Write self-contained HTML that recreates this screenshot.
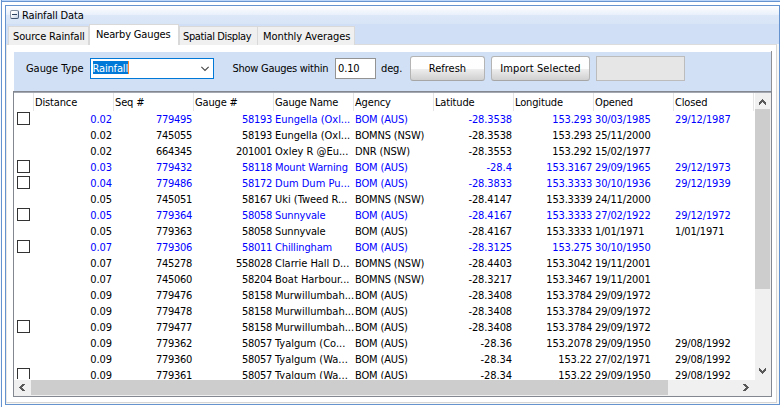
<!DOCTYPE html>
<html lang="en"><head><meta charset="utf-8"><title>Rainfall Data</title>
<style>
html,body{margin:0;padding:0;background:#fff;}
body{width:780px;height:407px;position:relative;overflow:hidden;font-family:"DejaVu Sans Condensed","Liberation Sans",sans-serif;font-size:11px;color:#000;letter-spacing:-0.15px;}
div,span,i{position:absolute;box-sizing:border-box;white-space:nowrap;}
.o0h{left:2px;top:0;width:778px;height:1px;background:#b9d6fa;}
.o0v{left:0;top:0;width:1px;height:407px;background:#f6f9fe;}
.o1h{left:1px;top:1px;width:779px;height:1px;background:#6593cf;}
.o1v{left:1px;top:0;width:1px;height:407px;background:#6593cf;}
.panel{left:5px;top:5px;width:775px;height:400px;border:1px solid #6593cf;background:#f9f8f4;}
.cap1{left:6px;top:6px;width:773px;height:9px;background:linear-gradient(#fefeff,#e8f0fb);}
.cap2{left:6px;top:15px;width:773px;height:9px;background:linear-gradient(#dce8f8,#d8e5f7);}
.strip{left:6px;top:24px;width:773px;height:20px;background:#d0dff5;}
.page{left:6px;top:44px;width:771px;height:359px;border:1px solid #d6d6d6;border-left-color:#ebe8e3;border-top-color:#dcdcdc;background:#fff;}
.tab{top:26px;height:19px;background:#f0f0f0;border:1px solid #d9d9d9;border-bottom:none;}
.tab span{top:3px;}
.tab.act{top:24px;height:21px;background:#fff;z-index:2;}
.ttl{left:22px;top:9px;}
.exp{left:10px;top:10px;width:9px;height:9px;border:1px solid;border-color:#7f8b9e #4d6180 #40536f #8f99aa;border-radius:2px;background:linear-gradient(135deg,#fff 25%,#c6d3e7);}
.exp:after{content:"";position:absolute;left:1px;top:3px;width:5px;height:1px;background:#2b3f5f;}
.bp{left:14px;top:52px;width:757px;height:39px;background:#d2e0f5;}
.bpr{left:771px;top:51px;width:1px;height:40px;background:#8f9094;}
.lbl{top:62px;}
.combo{left:90px;top:58px;width:124px;height:21px;border:1px solid #0078d7;background:#fff;}
.combo .sel{left:2px;top:2px;width:36px;height:13px;background:#0078d7;color:#fff;}
.combo .sel span{left:-0.5px;top:1px;}
.combo .sel:after{content:"";position:absolute;right:0;top:0;width:1px;height:13px;background:#ff8728;}
.tb{left:335px;top:58px;width:41px;height:21px;border:1px solid #939393;background:#fff;}
.tb span{left:2px;top:3px;}
.btn{top:56px;height:25px;border:1px solid #b4b4b4;border-bottom-color:#a6a6a6;border-radius:3px;background:linear-gradient(#fff 0%,#fefefe 50%,#ededed 54%,#d0d0d0 100%);text-align:center;line-height:24px;}
.btn span{position:static;}
.gb{left:596px;top:56px;width:89px;height:25px;border:1px solid #bcbcbc;background:#e6e6e6;}
.list{left:13px;top:91px;width:759px;height:306px;border:1px solid #828790;background:#fff;overflow:hidden;}
.hdr{left:0;top:0;width:757px;height:19px;border-top:1px solid #a4a8b0;}
.hc{top:0;height:18px;border-right:1px solid #e5e5e5;}
.hc span{left:1px;top:3px;}
.rows{left:0;top:19px;width:741px;height:268px;overflow:hidden;}
.row{position:relative;display:block;height:16px;width:741px;}
.row.b{color:#0000ff;}
.c{top:2px;width:78px;}
.c.r{text-align:right;letter-spacing:-0.3px;}
.c.l{margin-left:1px;}
.cb{left:3px;top:1px;width:13px;height:13px;border:1px solid #333;background:#fff;}
.vs{left:741px;top:1px;width:16px;height:287px;background:#f0f0f0;}
.hs{left:0;top:288px;width:757px;height:16px;background:#f0f0f0;}
.vt{left:0;top:16px;width:15px;height:180px;background:#cdcdcd;}
.ht{left:17px;top:0;width:637px;height:15px;background:#cdcdcd;}
svg{position:absolute;}
</style></head>
<body>
<div class="o0h"></div><div class="o0v"></div><div class="o1h"></div><div class="o1v"></div>
<div class="panel"></div>
<div class="cap1"></div><div class="cap2"></div><div class="strip"></div>
<i class="exp"></i><span class="ttl">Rainfall Data</span>
<div class="page"></div>
<div class="tab" style="left:8px;width:81px"><span style="left:4px">Source Rainfall</span></div>
<div class="tab act" style="left:89px;width:90px"><span style="left:6px;top:3px">Nearby Gauges</span></div>
<div class="tab" style="left:179px;width:79px"><span style="left:3px;letter-spacing:-0.36px">Spatial Display</span></div>
<div class="tab" style="left:257px;width:98px"><span style="left:5px;letter-spacing:-0.08px">Monthly Averages</span></div>
<div class="bp"></div><div class="bpr"></div>
<span class="lbl" style="left:26px;letter-spacing:-0.05px">Gauge Type</span>
<div class="combo"><div class="sel"><span>Rainfall</span></div>
<svg style="left:110px;top:7px" width="10" height="7" viewBox="0 0 10 7"><path d="M0.35 0.9 L4 4.5 L7.65 0.9" fill="none" stroke="#444" stroke-width="1.1"/></svg></div>
<span class="lbl" style="left:232.5px;letter-spacing:-0.27px">Show Gauges within</span>
<div class="tb"><span>0.10</span></div>
<span class="lbl" style="left:381px">deg.</span>
<div class="btn" style="left:410px;width:75px"><span style="letter-spacing:0">Refresh</span></div>
<div class="btn" style="left:491px;width:99px"><span style="letter-spacing:.1px">Import Selected</span></div>
<div class="gb"></div>
<div class="list">
<div class="hdr">
<div class="hc" style="left:0;width:20px"></div>
<div class="hc" style="left:20px;width:80px"><span>Distance</span></div>
<div class="hc" style="left:100px;width:80px"><span>Seq #</span></div>
<div class="hc" style="left:180px;width:80px"><span>Gauge #</span></div>
<div class="hc" style="left:260px;width:80px"><span>Gauge Name</span></div>
<div class="hc" style="left:340px;width:80px"><span>Agency</span></div>
<div class="hc" style="left:420px;width:80px"><span>Latitude</span></div>
<div class="hc" style="left:500px;width:80px"><span>Longitude</span></div>
<div class="hc" style="left:580px;width:80px"><span>Opened</span></div>
<div class="hc" style="left:660px;width:80px"><span>Closed</span></div>
</div>
<div class="rows">
<div class="row b"><i class="cb"></i><span class="c r" style="left:20px;letter-spacing:-0.07px">0.02</span><span class="c r" style="left:100px">779495</span><span class="c r" style="left:180px">58193</span><span class="c l" style="left:260px;letter-spacing:-0.02px">Eungella (Oxl...</span><span class="c l" style="left:340px">BOM (AUS)</span><span class="c r" style="left:420px;letter-spacing:-0.12px">-28.3538</span><span class="c r" style="left:500px;letter-spacing:-0.17px">153.293</span><span class="c l" style="left:580px">30/03/1985</span><span class="c l" style="left:660px">29/12/1987</span></div>
<div class="row"><span class="c r" style="left:20px;letter-spacing:-0.07px">0.02</span><span class="c r" style="left:100px">745055</span><span class="c r" style="left:180px">58193</span><span class="c l" style="left:260px;letter-spacing:-0.02px">Eungella (Oxl...</span><span class="c l" style="left:340px">BOMNS (NSW)</span><span class="c r" style="left:420px;letter-spacing:-0.12px">-28.3538</span><span class="c r" style="left:500px;letter-spacing:-0.17px">153.293</span><span class="c l" style="left:580px">25/11/2000</span><span class="c l" style="left:660px"></span></div>
<div class="row"><span class="c r" style="left:20px;letter-spacing:-0.07px">0.02</span><span class="c r" style="left:100px">664345</span><span class="c r" style="left:180px">201001</span><span class="c l" style="left:260px;letter-spacing:0.00px">Oxley R @Eu...</span><span class="c l" style="left:340px">DNR (NSW)</span><span class="c r" style="left:420px;letter-spacing:-0.12px">-28.3553</span><span class="c r" style="left:500px;letter-spacing:-0.17px">153.292</span><span class="c l" style="left:580px">15/02/1977</span><span class="c l" style="left:660px"></span></div>
<div class="row b"><i class="cb"></i><span class="c r" style="left:20px;letter-spacing:-0.07px">0.03</span><span class="c r" style="left:100px">779432</span><span class="c r" style="left:180px">58118</span><span class="c l" style="left:260px">Mount Warning</span><span class="c l" style="left:340px">BOM (AUS)</span><span class="c r" style="left:420px;letter-spacing:-0.02px">-28.4</span><span class="c r" style="left:500px;letter-spacing:-0.19px">153.3167</span><span class="c l" style="left:580px">29/09/1965</span><span class="c l" style="left:660px">29/12/1973</span></div>
<div class="row b"><i class="cb"></i><span class="c r" style="left:20px;letter-spacing:-0.07px">0.04</span><span class="c r" style="left:100px">779486</span><span class="c r" style="left:180px">58172</span><span class="c l" style="left:260px;letter-spacing:0.01px">Dum Dum Pu...</span><span class="c l" style="left:340px">BOM (AUS)</span><span class="c r" style="left:420px;letter-spacing:-0.12px">-28.3833</span><span class="c r" style="left:500px;letter-spacing:-0.19px">153.3333</span><span class="c l" style="left:580px">30/10/1936</span><span class="c l" style="left:660px">29/12/1939</span></div>
<div class="row"><span class="c r" style="left:20px;letter-spacing:-0.07px">0.05</span><span class="c r" style="left:100px">745051</span><span class="c r" style="left:180px">58167</span><span class="c l" style="left:260px;letter-spacing:-0.01px">Uki (Tweed R...</span><span class="c l" style="left:340px">BOMNS (NSW)</span><span class="c r" style="left:420px;letter-spacing:-0.12px">-28.4147</span><span class="c r" style="left:500px;letter-spacing:-0.19px">153.3339</span><span class="c l" style="left:580px">24/11/2000</span><span class="c l" style="left:660px"></span></div>
<div class="row b"><i class="cb"></i><span class="c r" style="left:20px;letter-spacing:-0.07px">0.05</span><span class="c r" style="left:100px">779364</span><span class="c r" style="left:180px">58058</span><span class="c l" style="left:260px">Sunnyvale</span><span class="c l" style="left:340px">BOM (AUS)</span><span class="c r" style="left:420px;letter-spacing:-0.12px">-28.4167</span><span class="c r" style="left:500px;letter-spacing:-0.19px">153.3333</span><span class="c l" style="left:580px">27/02/1922</span><span class="c l" style="left:660px">29/12/1972</span></div>
<div class="row"><span class="c r" style="left:20px;letter-spacing:-0.07px">0.05</span><span class="c r" style="left:100px">779363</span><span class="c r" style="left:180px">58058</span><span class="c l" style="left:260px">Sunnyvale</span><span class="c l" style="left:340px">BOM (AUS)</span><span class="c r" style="left:420px;letter-spacing:-0.12px">-28.4167</span><span class="c r" style="left:500px;letter-spacing:-0.19px">153.3333</span><span class="c l" style="left:580px">1/01/1971</span><span class="c l" style="left:660px">1/01/1971</span></div>
<div class="row b"><i class="cb"></i><span class="c r" style="left:20px;letter-spacing:-0.07px">0.07</span><span class="c r" style="left:100px">779306</span><span class="c r" style="left:180px">58011</span><span class="c l" style="left:260px">Chillingham</span><span class="c l" style="left:340px">BOM (AUS)</span><span class="c r" style="left:420px;letter-spacing:-0.12px">-28.3125</span><span class="c r" style="left:500px;letter-spacing:-0.17px">153.275</span><span class="c l" style="left:580px">30/10/1950</span><span class="c l" style="left:660px"></span></div>
<div class="row"><span class="c r" style="left:20px;letter-spacing:-0.07px">0.07</span><span class="c r" style="left:100px">745278</span><span class="c r" style="left:180px">558028</span><span class="c l" style="left:260px;letter-spacing:-0.03px">Clarrie Hall D...</span><span class="c l" style="left:340px">BOMNS (NSW)</span><span class="c r" style="left:420px;letter-spacing:-0.12px">-28.4403</span><span class="c r" style="left:500px;letter-spacing:-0.19px">153.3042</span><span class="c l" style="left:580px">19/11/2001</span><span class="c l" style="left:660px"></span></div>
<div class="row"><span class="c r" style="left:20px;letter-spacing:-0.07px">0.07</span><span class="c r" style="left:100px">745060</span><span class="c r" style="left:180px">58204</span><span class="c l" style="left:260px;letter-spacing:-0.01px">Boat Harbour...</span><span class="c l" style="left:340px">BOMNS (NSW)</span><span class="c r" style="left:420px;letter-spacing:-0.12px">-28.3217</span><span class="c r" style="left:500px;letter-spacing:-0.19px">153.3467</span><span class="c l" style="left:580px">19/11/2001</span><span class="c l" style="left:660px"></span></div>
<div class="row"><span class="c r" style="left:20px;letter-spacing:-0.07px">0.09</span><span class="c r" style="left:100px">779476</span><span class="c r" style="left:180px">58158</span><span class="c l" style="left:260px;letter-spacing:-0.01px">Murwillumbah...</span><span class="c l" style="left:340px">BOM (AUS)</span><span class="c r" style="left:420px;letter-spacing:-0.12px">-28.3408</span><span class="c r" style="left:500px;letter-spacing:-0.19px">153.3784</span><span class="c l" style="left:580px">29/09/1972</span><span class="c l" style="left:660px"></span></div>
<div class="row"><span class="c r" style="left:20px;letter-spacing:-0.07px">0.09</span><span class="c r" style="left:100px">779478</span><span class="c r" style="left:180px">58158</span><span class="c l" style="left:260px;letter-spacing:-0.01px">Murwillumbah...</span><span class="c l" style="left:340px">BOM (AUS)</span><span class="c r" style="left:420px;letter-spacing:-0.12px">-28.3408</span><span class="c r" style="left:500px;letter-spacing:-0.19px">153.3784</span><span class="c l" style="left:580px">29/09/1972</span><span class="c l" style="left:660px"></span></div>
<div class="row"><i class="cb"></i><span class="c r" style="left:20px;letter-spacing:-0.07px">0.09</span><span class="c r" style="left:100px">779477</span><span class="c r" style="left:180px">58158</span><span class="c l" style="left:260px;letter-spacing:-0.01px">Murwillumbah...</span><span class="c l" style="left:340px">BOM (AUS)</span><span class="c r" style="left:420px;letter-spacing:-0.12px">-28.3408</span><span class="c r" style="left:500px;letter-spacing:-0.19px">153.3784</span><span class="c l" style="left:580px">29/09/1972</span><span class="c l" style="left:660px"></span></div>
<div class="row"><span class="c r" style="left:20px;letter-spacing:-0.07px">0.09</span><span class="c r" style="left:100px">779362</span><span class="c r" style="left:180px">58057</span><span class="c l" style="left:260px;letter-spacing:0.00px">Tyalgum (Co...</span><span class="c l" style="left:340px">BOM (AUS)</span><span class="c r" style="left:420px;letter-spacing:-0.07px">-28.36</span><span class="c r" style="left:500px;letter-spacing:-0.19px">153.2078</span><span class="c l" style="left:580px">29/09/1950</span><span class="c l" style="left:660px">29/08/1992</span></div>
<div class="row"><span class="c r" style="left:20px;letter-spacing:-0.07px">0.09</span><span class="c r" style="left:100px">779360</span><span class="c r" style="left:180px">58057</span><span class="c l" style="left:260px;letter-spacing:0.00px">Tyalgum (Wa...</span><span class="c l" style="left:340px">BOM (AUS)</span><span class="c r" style="left:420px;letter-spacing:-0.07px">-28.34</span><span class="c r" style="left:500px;letter-spacing:-0.15px">153.22</span><span class="c l" style="left:580px">27/02/1971</span><span class="c l" style="left:660px">29/08/1992</span></div>
<div class="row"><i class="cb"></i><span class="c r" style="left:20px;letter-spacing:-0.07px">0.09</span><span class="c r" style="left:100px">779361</span><span class="c r" style="left:180px">58057</span><span class="c l" style="left:260px;letter-spacing:0.00px">Tyalgum (Wa...</span><span class="c l" style="left:340px">BOM (AUS)</span><span class="c r" style="left:420px;letter-spacing:-0.07px">-28.34</span><span class="c r" style="left:500px;letter-spacing:-0.15px">153.22</span><span class="c l" style="left:580px">29/09/1950</span><span class="c l" style="left:660px">29/08/1992</span></div>
</div>
<div class="vs"><div class="vt"></div></div>
<div class="hs"><div class="ht"></div></div>
</div>
<svg style="left:0;top:0" width="780" height="407" viewBox="0 0 780 407" shape-rendering="crispEdges"><path fill="#585858" d="M762 99h1v1h-1zM761 100h3v1h-3zM760 101h5v1h-5zM759 102h3v1h-3zM763 102h3v1h-3zM759 103h2v1h-2zM764 103h2v1h-2zM759 104h1v1h-1zM765 104h1v1h-1zM759 368h1v1h-1zM765 368h1v1h-1zM759 369h2v1h-2zM764 369h2v1h-2zM759 370h3v1h-3zM763 370h3v1h-3zM760 371h5v1h-5zM761 372h3v1h-3zM762 373h1v1h-1zM22 384h3v1h-3zM21 385h3v1h-3zM20 386h3v1h-3zM19 387h3v1h-3zM20 388h3v1h-3zM21 389h3v1h-3zM22 390h3v1h-3zM743 384h3v1h-3zM744 385h3v1h-3zM745 386h3v1h-3zM746 387h3v1h-3zM745 388h3v1h-3zM744 389h3v1h-3zM743 390h3v1h-3z"/></svg>
</body></html>
